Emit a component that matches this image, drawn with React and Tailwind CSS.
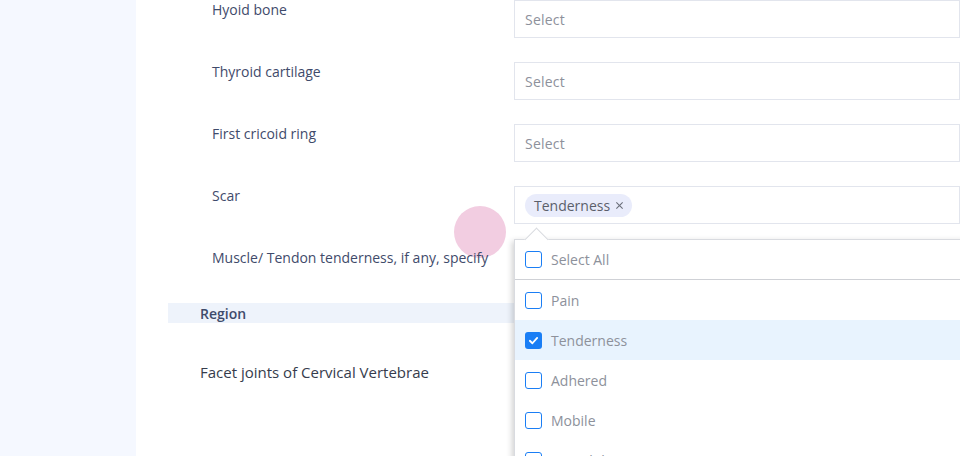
import React from "react";

const font = { fontFamily: '"Open Sans", "Liberation Sans", sans-serif' };

function Checkbox({ checked }) {
  if (checked) {
    return (
      <span className="flex h-[17px] w-[17px] items-center justify-center rounded-[3px] bg-[#1a7ef5]">
        <svg width="11" height="11" viewBox="0 0 12 12" fill="none">
          <path d="M2 6.3 L4.8 9 L10 3.2" stroke="white" strokeWidth="2" strokeLinecap="round" strokeLinejoin="round" />
        </svg>
      </span>
    );
  }
  return <span className="h-[17px] w-[17px] rounded-[3px] border-[1.5px] border-[#1a7ef5] bg-white" />;
}

function Row({ label, children }) {
  return (
    <div className="mb-6 flex h-[38px]">
      <div className="relative z-10 w-[302px] text-[14px] leading-[19px] text-[#3f4b6b]">{label}</div>
      <div className="flex flex-1 items-center border border-[#e2e5ed] bg-white px-[10px]">{children}</div>
    </div>
  );
}

const Placeholder = () => <span className="text-[14px] tracking-[0.2px] text-[#8d919b]">Select</span>;

export default function App() {
  const items = [
    { t: "Pain" },
    { t: "Tenderness", c: true },
    { t: "Adhered" },
    { t: "Mobile" },
    { t: "Immobile" },
  ];
  return (
    <div className="relative flex h-[456px] w-[960px] overflow-hidden bg-white" style={font}>
      <div className="w-[136px] shrink-0 bg-[#f5f8ff]" />
      <div className="relative flex-1">
        <div className="absolute left-[318px] top-[206px] h-[52px] w-[52px] rounded-full bg-[#f2cde1]" />
        <div className="relative pl-[76px]">
          <Row label="Hyoid bone"><Placeholder /></Row>
          <Row label="Thyroid cartilage"><Placeholder /></Row>
          <Row label="First cricoid ring"><Placeholder /></Row>
          <Row label="Scar">
            <span className="flex h-[23px] items-center gap-[5px] rounded-full bg-[#e9ecfb] pl-[9px] pr-[8px] text-[14px] text-[#5b5f6b]">
              Tenderness
              <svg width="9" height="9" viewBox="0 0 10 10">
                <path d="M1.5 1.5 L8.5 8.5 M8.5 1.5 L1.5 8.5" stroke="#6b6f7a" strokeWidth="1.2" />
              </svg>
            </span>
          </Row>
          <Row label="Muscle/ Tendon tenderness, if any, specify"></Row>
        </div>
        <div className="ml-[32px] mt-[-7px] flex h-[20px] items-center bg-[#eef3fb] pl-[32px] text-[14px] font-semibold text-[#3f4b6b]">
          Region
        </div>
        <div className="ml-[64px] mt-[38px] text-[15px] text-[#363c4c]">Facet joints of Cervical Vertebrae</div>

        {/* dropdown */}
        <div className="absolute left-[378px] top-[239px] w-[480px] border border-[#d9dbe0] bg-white shadow-[-2px_2px_6px_rgba(0,0,0,0.18)]">
          <div className="absolute left-[13px] top-[-9px] h-[17px] w-[17px] rotate-45 border-l border-t border-[#d9dbe0] bg-white" />
          <div className="relative flex h-[40px] items-center gap-[9px] border-b border-[#cfd1d6] pl-[10px] text-[14px] text-[#8d919b]">
            <Checkbox />
            Select All
          </div>
          {items.map((it) => (
            <div
              key={it.t}
              className={`flex h-[40px] items-center gap-[9px] pl-[10px] text-[14px] text-[#8d919b] ${it.c ? "bg-[#e8f3fe]" : ""}`}
            >
              <Checkbox checked={it.c} />
              {it.t}
            </div>
          ))}
        </div>
      </div>
    </div>
  );
}
